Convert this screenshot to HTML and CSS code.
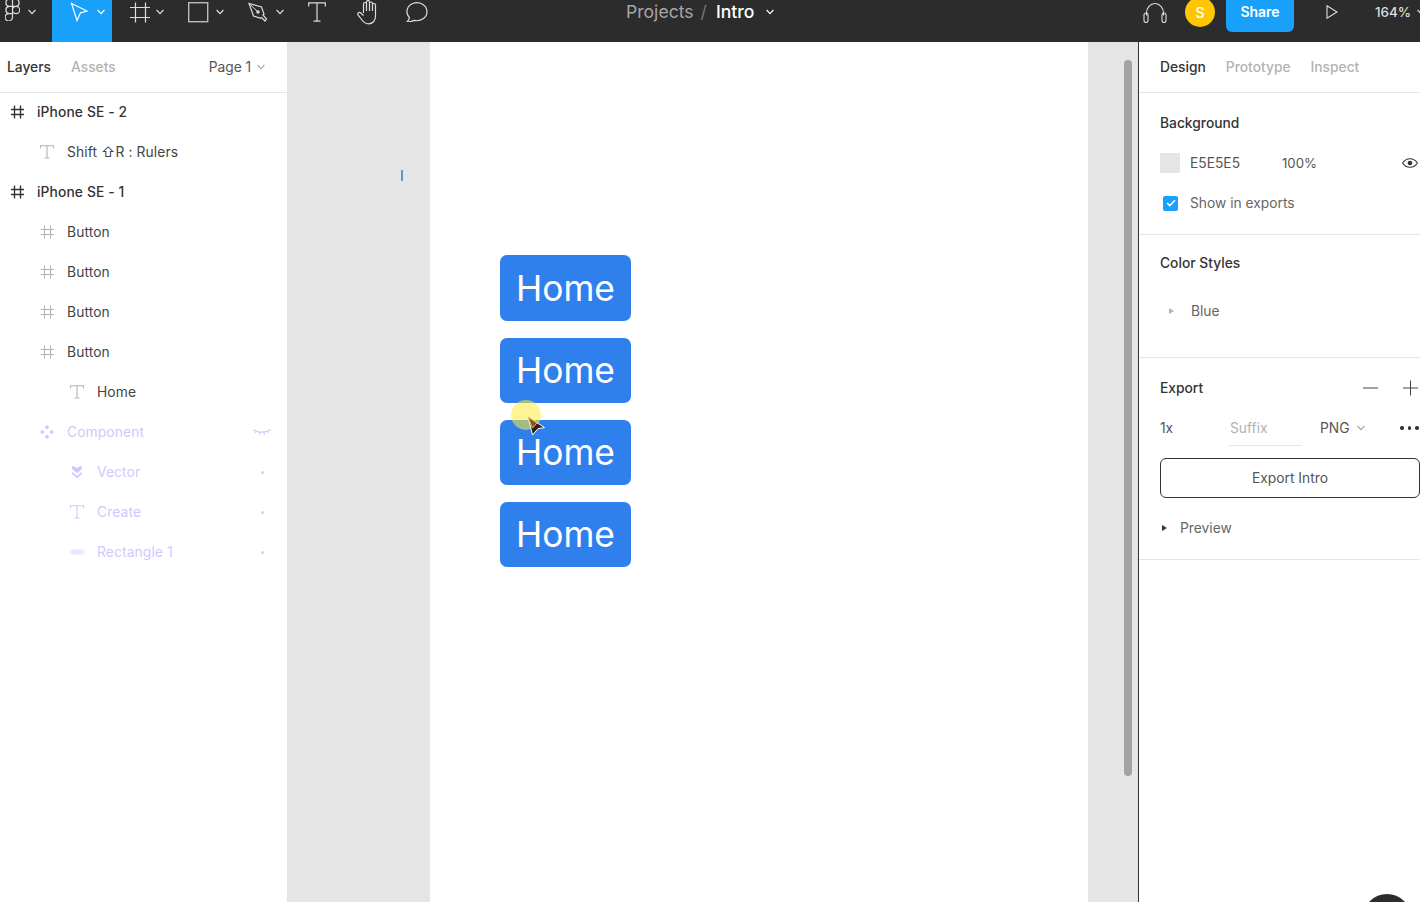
FILE: index.html
```html
<!DOCTYPE html>
<html lang="en">
<head>
<meta charset="utf-8">
<title>Intro</title>
<link rel="stylesheet" href="styles.css">
</head>
<body>
<svg class="defs" width="0" height="0" aria-hidden="true">
  <symbol id="chev" viewBox="0 0 8 6"><path d="M.6 1 4 4.600 7.400 1" fill="none" stroke="currentColor" stroke-width="1.200"/></symbol>
  <symbol id="hash" viewBox="0 0 14 14"><path d="M4.500.5v13M10.500.5v13M1 4.500h13M1 9.500h13" fill="none" stroke="currentColor" stroke-width="1"/></symbol>
  <symbol id="hash-bold" viewBox="0 0 14 14"><path d="M4.500.5v13M10.500.5v13M1 4.500h13M1 9.500h13" fill="none" stroke="currentColor" stroke-width="1.400"/></symbol>
  <symbol id="tee" viewBox="0 0 14 14"><path d="M.5 3.200V.8h13v2.400M7 .8v12.200M4.500 13h5" fill="none" stroke="currentColor" stroke-width="1.100"/></symbol>
  <symbol id="comp" viewBox="0 0 14 14"><path d="M7 0l2.300 2.300L7 4.600 4.700 2.300zM7 9.400l2.300 2.300L7 14l-2.300-2.300zM2.300 4.700 4.600 7l-2.300 2.300L0 7zM11.700 4.700 14 7l-2.300 2.300L9.400 7z" fill="currentColor"/></symbol>
  <symbol id="vect" viewBox="0 0 14 14"><path d="M2 1.500h3L7 3.300l2-1.800h3V4L7 8.200 2 4zM2 6.800 7 11l5-4.200V9L7 13.200 2 9z" fill="currentColor"/></symbol>
  <symbol id="bar" viewBox="0 0 14 6"><rect x="1" y="1" width="12" height="4" fill="currentColor" opacity=".45" stroke="currentColor" stroke-width="1"/></symbol>
</svg>

<header class="topbar">
  <div class="tools">
    <div class="tool tool-logo">
      <svg class="ico-logo" viewBox="0 0 15 22"><path d="M7.500 0H4a3.700 3.700 0 0 0 0 7.300h3.500zM7.500 0H11a3.700 3.700 0 0 1 0 7.300H7.500zM7.500 7.300H4a3.700 3.700 0 0 0 0 7.300h3.500zM7.500 14.600H4A3.700 3.700 0 1 0 7.500 18.300zM14.700 11a3.600 3.600 0 1 1-7.200 0 3.600 3.600 0 0 1 7.200 0z" fill="none" stroke="#ddd" stroke-width="1.200"/></svg>
      <svg class="chev"><use href="#chev"/></svg>
    </div>
    <div class="tool tool-move">
      <svg class="ico-20" viewBox="0 0 20 20"><path d="M2.500 1.500 18 9l-6.500 1.800L8 18.500z" fill="none" stroke="#fff" stroke-width="1.200"/></svg>
      <svg class="chev chev-white"><use href="#chev"/></svg>
    </div>
    <div class="tool tool-frame">
      <svg class="ico-20" viewBox="0 0 20 20"><path d="M5.500.5v20M15.500.5v20M0 5.500h20M0 15.500h20" fill="none" stroke="#ddd" stroke-width="1.200"/></svg>
      <svg class="chev"><use href="#chev"/></svg>
    </div>
    <div class="tool tool-rect">
      <svg class="ico-20" viewBox="0 0 20 20"><rect x=".7" y=".7" width="19" height="19" fill="none" stroke="#bbb" stroke-width="1.400"/></svg>
      <svg class="chev"><use href="#chev"/></svg>
    </div>
    <div class="tool tool-pen">
      <svg class="ico-20" viewBox="0 0 20 20"><path d="M1 1.500 13.500 5l2.500 7-1 1 3.500 4-1.500 2-3.500-3.500-1 .8-7-2.300z" fill="none" stroke="#ddd" stroke-width="1.200"/><path d="M1 1.500 9 9" stroke="#ddd" stroke-width="1"/><circle cx="10" cy="10" r="1.700" fill="#ddd"/></svg>
      <svg class="chev"><use href="#chev"/></svg>
    </div>
    <div class="tool tool-text">
      <svg class="ico-t" viewBox="0 0 18 20"><path d="M.7 4.500V.8h16.600v3.700M9 .8v18.400M5.500 19.200h7" fill="none" stroke="#ddd" stroke-width="1.200"/></svg>
    </div>
    <div class="tool tool-hand">
      <svg class="ico-hand" viewBox="0 0 24 26"><path d="M7.500 14V5a1.500 1.500 0 0 1 3 0V3a1.500 1.500 0 0 1 3 0v1.500a1.500 1.500 0 0 1 3 0V6a1.500 1.500 0 0 1 3 0v11c0 5-3 7.800-6.800 7.800-3 0-5-1.300-6.700-3.800L2 15.800c-1-1.800 1.300-3.300 2.800-1.800l2.700 2.500M10.500 4v8M13.500 4v8M16.500 5v7" fill="none" stroke="#ddd" stroke-width="1.200"/></svg>
    </div>
    <div class="tool tool-comment">
      <svg class="ico-comment" viewBox="0 0 22 20"><path d="M1 20c1.500-1.500 2.500-2.800 2.300-4.500A10 9 0 1 1 8 18.300C5.800 19.700 3.500 20 1 20z" fill="none" stroke="#ddd" stroke-width="1.200"/></svg>
    </div>
  </div>
  <div class="doc-title">
    <span class="crumb">Projects</span>
    <span class="slash">/</span>
    <span class="doc-name">Intro</span>
    <svg class="chev chev-white"><use href="#chev"/></svg>
  </div>
  <div class="top-right">
    <svg class="ico-phones" viewBox="0 0 24 21"><path d="M3.500 13.500V11a8.500 9.500 0 0 1 17 0v2.500" fill="none" stroke="#ddd" stroke-width="1.100"/><rect x="1" y="11" width="4" height="9.500" rx="2" fill="none" stroke="#ddd" stroke-width="1.100"/><rect x="19" y="11" width="4" height="9.500" rx="2" fill="none" stroke="#ddd" stroke-width="1.100"/></svg>
    <span class="avatar">S</span>
    <span class="share">Share</span>
    <svg class="ico-play" viewBox="0 0 12 14"><path d="M1 .8 11 7 1 13.200z" fill="none" stroke="#ddd" stroke-width="1.100"/></svg>
    <span class="zoom">164%</span>
    <svg class="chev"><use href="#chev"/></svg>
  </div>
</header>

<main class="workspace">
  <aside class="left">
    <nav class="tabs">
      <span class="tab tab-on">Layers</span>
      <span class="tab">Assets</span>
      <span class="page">Page 1 <svg class="chev chev-gray"><use href="#chev"/></svg></span>
    </nav>
    <ul class="layers">
      <li class="layer d0 strong"><svg class="li hash-dark"><use href="#hash-bold"/></svg><span>iPhone SE - 2</span></li>
      <li class="layer d1"><svg class="li"><use href="#tee"/></svg><span>Shift ⇧R : Rulers</span></li>
      <li class="layer d0 strong"><svg class="li hash-dark"><use href="#hash-bold"/></svg><span>iPhone SE - 1</span></li>
      <li class="layer d1"><svg class="li"><use href="#hash"/></svg><span>Button</span></li>
      <li class="layer d1"><svg class="li"><use href="#hash"/></svg><span>Button</span></li>
      <li class="layer d1"><svg class="li"><use href="#hash"/></svg><span>Button</span></li>
      <li class="layer d1"><svg class="li"><use href="#hash"/></svg><span>Button</span></li>
      <li class="layer d2"><svg class="li"><use href="#tee"/></svg><span>Home</span></li>
      <li class="layer d1 ghost"><svg class="li"><use href="#comp"/></svg><span>Component</span>
        <svg class="eye-closed" viewBox="0 0 18 8"><path d="M.5 1.500C4 5 14 5 17.500 1.500M3.500 3 2 5M7 4.300 6.500 7M11 4.300 11.500 7M14.500 3 16 5" fill="none" stroke="currentColor" stroke-width="1.100"/></svg></li>
      <li class="layer d2 ghost"><svg class="li"><use href="#vect"/></svg><span>Vector</span><i class="dot"></i></li>
      <li class="layer d2 ghost"><svg class="li"><use href="#tee"/></svg><span>Create</span><i class="dot"></i></li>
      <li class="layer d2 ghost"><svg class="li li-bar"><use href="#bar"/></svg><span>Rectangle 1</span><i class="dot"></i></li>
    </ul>
  </aside>

  <section class="canvas">
    <div class="gutter gutter-left"></div>
    <div class="frame">
      <div class="btn">Home</div>
      <div class="btn">Home</div>
      <div class="btn">Home</div>
      <div class="btn">Home</div>
    </div>
    <div class="gutter gutter-right"></div>
    <i class="tick"></i>
    <i class="scroll"></i>
    <i class="halo"></i>
    <svg class="cursor" viewBox="0 0 18 20"><path d="M1 1 17.500 11.500l-6.500 1.200L5.500 19z" fill="#2b2118" stroke="#fff" stroke-width="1"/><path d="M1 1 10 7 5.500 12z" fill="#7a5426" stroke="#f5b93c" stroke-width="1"/></svg>
  </section>

  <aside class="right">
    <nav class="tabs tabs-right">
      <span class="tab tab-on">Design</span>
      <span class="tab">Prototype</span>
      <span class="tab">Inspect</span>
    </nav>
    <section class="sec sec-bg">
      <h2 class="row title">Background</h2>
      <div class="row">
        <i class="swatch"></i><span class="hex">E5E5E5</span><span class="pct">100%</span>
        <svg class="eye" viewBox="0 0 16 10"><path d="M.6 5C2.500 2 5 .7 8 .7S13.500 2 15.400 5C13.500 8 11 9.300 8 9.300S2.500 8 .6 5z" fill="none" stroke="#333" stroke-width="1.100"/><circle cx="8" cy="5" r="2.300" fill="#333"/></svg>
      </div>
      <div class="row">
        <span class="check"><svg viewBox="0 0 10 8"><path d="M1 4l2.800 2.600L9 1.200" fill="none" stroke="#fff" stroke-width="1.600"/></svg></span>
        <span class="muted">Show in exports</span>
      </div>
    </section>
    <section class="sec sec-colors">
      <h2 class="row title">Color Styles</h2>
      <div class="row row-blue"><i class="tri tri-gray"></i><span class="muted">Blue</span></div>
    </section>
    <section class="sec sec-export">
      <div class="row">
        <h2 class="title">Export</h2>
        <svg class="pm pm-minus" viewBox="0 0 16 16"><path d="M0 8h15" stroke="#444" stroke-width="1"/></svg>
        <svg class="pm pm-plus" viewBox="0 0 16 16"><path d="M0 8h15M7.500 .5v15" stroke="#444" stroke-width="1"/></svg>
      </div>
      <div class="row">
        <span class="scale">1x</span>
        <span class="suffix">Suffix</span>
        <span class="fmt">PNG</span>
        <svg class="chev chev-gray"><use href="#chev"/></svg>
        <span class="dots"><i></i><i></i><i></i></span>
      </div>
      <div class="export-btn">Export Intro</div>
      <div class="row row-preview"><i class="tri"></i><span class="muted">Preview</span></div>
    </section>
  </aside>
</main>
<i class="help"></i>
</body>
</html>
```

FILE: styles.css
```css
* { box-sizing: border-box; }
html, body { margin: 0; height: 100%; }
body {
  width: 1420px;
  height: 902px;
  overflow: hidden;
  position: relative;
  background: #fff;
  font-family: Inter, "Noto Sans", "DejaVu Sans", sans-serif;
  font-size: 13.8px;
  color: #444;
  display: flex;
  flex-direction: column;
}
.defs { position: absolute; }
i { display: block; }

/* top bar */
.topbar {
  height: 42px;
  flex: none;
  background: #2c2c2c;
  display: flex;
  align-items: flex-start;
  overflow: hidden;
}
.tools { display: flex; align-items: flex-start; flex: none; }
.tool { height: 42px; display: flex; align-items: flex-start; padding-top: 2px; }
.tool-logo { width: 52px; padding-left: 5px; gap: 8px; margin-top: 0; padding-top: 0; }
.tool-move { width: 60px; background: #18a0fb; padding-left: 17px; gap: 8px; }
.tool-frame { width: 60px; padding-left: 18px; gap: 6px; }
.tool-rect { width: 60px; padding-left: 16px; gap: 8px; }
.tool-pen { width: 60px; padding-left: 16px; gap: 8px; }
.tool-text { width: 50px; padding-left: 16px; }
.tool-hand { width: 50px; padding-left: 14px; padding-top: 0; }
.tool-comment { width: 50px; padding-left: 14px; padding-top: 2px; }
.ico-logo { width: 15px; height: 22px; display: block; margin-top: -1px; }
.ico-20 { width: 20px; height: 20px; display: block; flex: none; overflow: visible; }
.ico-t { width: 18px; height: 20px; display: block; }
.ico-hand { width: 24px; height: 26px; display: block; margin-top: -1px; }
.ico-comment { width: 22px; height: 20px; display: block; }
.chev { width: 8px; height: 6px; flex: none; color: #ddd; display: block; }
.tool .chev { margin-top: 7px; }
.tool-logo .chev { margin-top: 9px; }
.chev-white { color: #fff; }
.chev-gray { color: #a8a8a8; }

.doc-title {
  margin-left: 184px;
  width: 160px;
  height: 23px;
  display: flex;
  align-items: center;
  font-size: 17.6px;
  flex: none;
}
.crumb { color: #a6a6a6; }
.slash { color: #777; margin-left: 7px; }
.doc-name { color: #fff; margin-left: 9px; font-weight: 500; }
.doc-title .chev { margin-left: 12px; }

.top-right {
  margin-left: 357px;
  display: flex;
  align-items: flex-start;
  flex: none;
}
.ico-phones { width: 24px; height: 21px; margin-top: 2px; display: block; }
.avatar {
  width: 30px; height: 30px; border-radius: 50%;
  background: #ffc700; color: #fff;
  margin: -3px 0 0 18px;
  display: flex; align-items: center; justify-content: center;
  font-weight: 500; font-size: 14px;
}
.share {
  margin-left: 11px;
  width: 68px; height: 32px;
  background: #18a0fb; color: #fff;
  border-radius: 0 0 6px 6px;
  display: flex; align-items: center; justify-content: center;
  font-weight: 600; font-size: 14px;
  padding-bottom: 9px;
}
.ico-play { width: 12px; height: 14px; margin: 5px 0 0 32px; display: block; }
.zoom { margin: 3px 0 0 37px; color: #ddd; font-size: 13.4px; font-weight: 500; line-height: 18px; }
.top-right .chev { margin: 9px 0 0 6px; }

/* workspace */
.workspace { flex: 1; display: flex; min-height: 0; }
.left { width: 287px; flex: none; background: #fff; }
.tabs {
  height: 51px;
  border-bottom: 1px solid #e5e5e5;
  display: flex;
  align-items: center;
  padding: 0 0 0 7px;
  gap: 20px;
}
.tab { color: #b3b3b3; font-weight: 500; }
.tab-on { color: #333; }
.page { margin-left: 73px; display: flex; align-items: center; gap: 6px; color: #555; }
.layers { list-style: none; margin: -1px 0 0; padding: 0; }
.layer { height: 40px; display: flex; align-items: center; color: #444; position: relative; letter-spacing: .12px; }
.d0 { padding-left: 10px; }
.d1 { padding-left: 40px; }
.d2 { padding-left: 70px; }
.strong { color: #333; font-weight: 500; }
.li { width: 14px; height: 14px; flex: none; margin-right: 13px; color: #b3b3b3; display: block; }
.hash-dark { color: #333; }
.li-bar { height: 6px; }
.ghost { color: #cfc8ff; }
.ghost .li { color: #cfc8ff; }
.eye-closed { width: 18px; height: 8px; margin-left: auto; margin-right: 16px; display: block; }
.dot { width: 3px; height: 3px; border-radius: 50%; background: #cfc8ff; margin-left: auto; margin-right: 23px; }

/* canvas */
.canvas { flex: 1; display: flex; position: relative; min-width: 0; }
.gutter { background: #e5e5e5; flex: none; }
.gutter-left { width: 143px; }
.gutter-right { width: 50px; }
.frame {
  width: 658px;
  flex: none;
  background: #fff;
  padding: 213.4px 0 0 70px;
  display: flex;
  flex-direction: column;
  gap: 16.8px;
}
.btn {
  width: 131px;
  height: 65.4px;
  background: #2f80ed;
  border-radius: 7px;
  color: #fff;
  font-size: 35.3px;
  display: flex;
  align-items: center;
  justify-content: center;
}
.tick { position: absolute; left: 114px; top: 128px; width: 2px; height: 11px; background: #5b93e0; }
.scroll { position: absolute; left: 837px; top: 18px; width: 8px; height: 716px; border-radius: 4px; background: #a3a3a3; }
.halo { position: absolute; left: 224px; top: 358px; width: 30px; height: 30px; border-radius: 50%; background: rgba(255, 235, 59, .55); }
.cursor { position: absolute; left: 240px; top: 374px; width: 18px; height: 20px; }

/* right panel */
.right { width: 282px; flex: none; background: #fff; border-left: 1px solid #333; }
.tabs-right { padding-left: 21px; }
.sec { padding-left: 21px; border-bottom: 1px solid #e5e5e5; }
.sec-bg { padding-top: 10px; height: 142px; }
.sec-colors { padding-top: 8px; height: 123px; }
.sec-export { padding-top: 10px; height: 202px; }
.row { height: 40px; display: flex; align-items: center; margin: 0; }
.title { font-size: 13.8px; font-weight: 500; color: #333; margin: 0; }
.swatch { width: 20px; height: 20px; background: #e5e5e5; border-radius: 1px; flex: none; }
.hex { margin-left: 10px; width: 92px; color: #555; }
.pct { color: #555; font-size: 13.2px; }
.eye { width: 16px; height: 10px; margin-left: auto; margin-right: 2px; display: block; }
.check {
  width: 15px; height: 15px; border-radius: 2px; background: #18a0fb;
  margin: 0 12px 0 3px; display: flex; align-items: center; justify-content: center; flex: none;
}
.check svg { width: 10px; height: 8px; display: block; }
.muted { color: #666; }
.row-blue { margin-top: 8px; padding-left: 9px; gap: 17px; }
.tri { width: 0; height: 0; border-left: 5px solid #333; border-top: 3px solid transparent; border-bottom: 3px solid transparent; margin-left: 2px; }
.tri-gray { border-left-color: #b3b3b3; margin-left: 0; }
.pm { width: 16px; height: 16px; display: block; flex: none; }
.pm-minus { margin-left: auto; }
.pm-plus { margin: 0 1px 0 24px; }
.scale { width: 69px; color: #555; }
.suffix { width: 73px; height: 37px; padding: 11px 0 0 1px; line-height: 16px; color: #b3b3b3; border-bottom: 1px solid #e5e5e5; align-self: flex-start; margin-top: 1px; }
.fmt { margin-left: 18px; color: #555; }
.row .chev-gray { margin-left: 7px; }
.dots { display: flex; gap: 4px; margin-left: auto; margin-right: 1.5px; }
.dots i { width: 3.5px; height: 3.5px; border-radius: 50%; background: #333; }
.export-btn {
  width: 260px; height: 40px; margin-top: 10px;
  border: 1px solid #333; border-radius: 6px;
  display: flex; align-items: center; justify-content: center;
  color: #555;
}
.row-preview { margin-top: 10px; gap: 13px; }
.help { position: absolute; left: 1363px; top: 894px; width: 48px; height: 48px; border-radius: 50%; background: #2c2c2c; }
```
